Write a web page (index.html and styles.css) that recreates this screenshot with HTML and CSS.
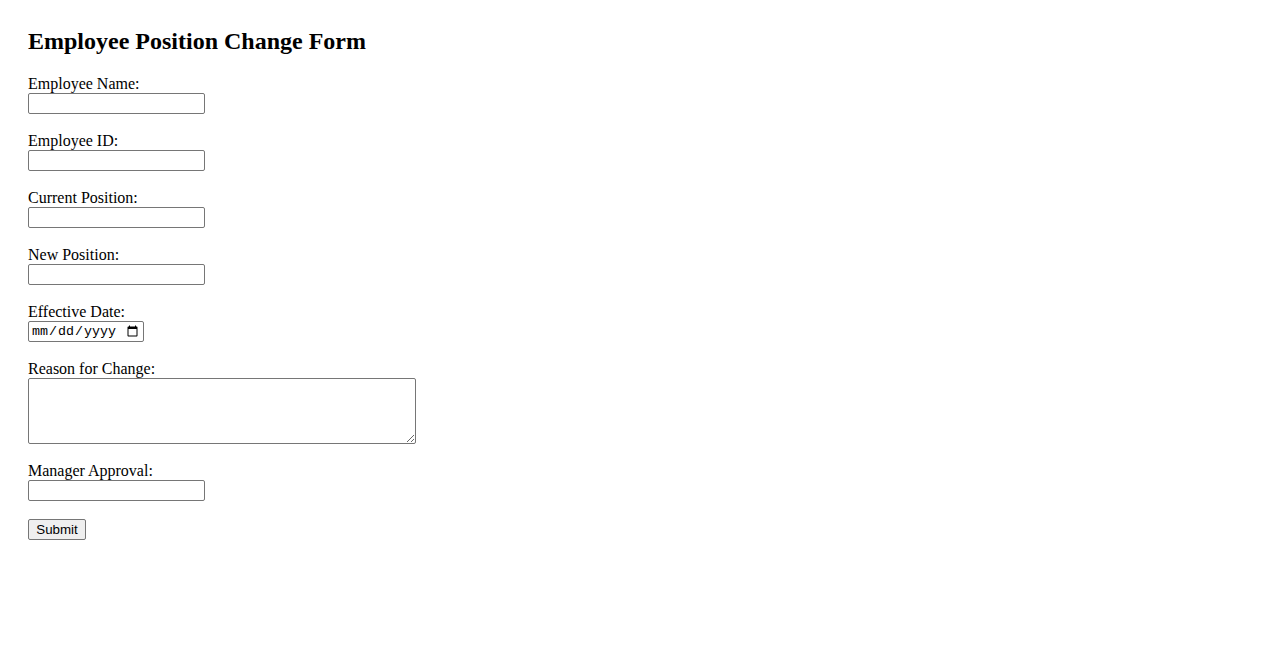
FILE: index.html
```html
<!DOCTYPE html>
<html lang="en">
<head>
<meta charset="utf-8">
<title>Employee Position Change Form</title>
<link rel="stylesheet" href="styles.css">
</head>
<body>
<h2 class="title">Employee Position Change Form</h2>
<form class="form">
  <div class="field">
    <label class="label" for="name">Employee Name:</label>
    <input class="text" type="text" id="name">
  </div>
  <div class="field">
    <label class="label" for="eid">Employee ID:</label>
    <input class="text" type="text" id="eid">
  </div>
  <div class="field">
    <label class="label" for="cur">Current Position:</label>
    <input class="text" type="text" id="cur">
  </div>
  <div class="field">
    <label class="label" for="newp">New Position:</label>
    <input class="text" type="text" id="newp">
  </div>
  <div class="field">
    <label class="label" for="date">Effective Date:</label>
    <input class="date" type="date" id="date">
  </div>
  <div class="field">
    <label class="label" for="reason">Reason for Change:</label>
    <textarea class="area" id="reason"></textarea>
  </div>
  <div class="field">
    <label class="label" for="mgr">Manager Approval:</label>
    <input class="text" type="text" id="mgr">
  </div>
  <div class="field">
    <button class="submit" type="submit">Submit</button>
  </div>
</form>
</body>
</html>
```
FILE: styles.css
```css
html, body {
  background: #fff;
}
body {
  margin: 0;
  padding: 28px;
  font-family: "Liberation Serif", "Times New Roman", serif;
  font-size: 16px;
  color: #000;
}
.title {
  margin: 0 0 20px;
  font-size: 24px;
  font-weight: bold;
}
.field {
  margin-bottom: 18px;
}
.label {
  display: block;
  height: 18px;
}
.text {
  box-sizing: border-box;
  display: block;
  width: 177px;
  height: 21px;
  margin: 0;
  font-family: "Liberation Sans", Arial, sans-serif;
  font-size: 13.33px;
  border: 1px solid #767676;
  border-radius: 2px;
  padding: 1px 2px;
}
.date {
  box-sizing: border-box;
  display: block;
  width: 116px;
  height: 21px;
  margin: 0;
  font-family: "Liberation Mono", monospace;
  font-size: 13.33px;
  border: 1px solid #767676;
  border-radius: 2px;
  padding: 1px 2px;
}
.area {
  box-sizing: border-box;
  display: block;
  width: 388px;
  height: 66px;
  margin: 0;
  border: 1px solid #767676;
  border-radius: 2px;
  padding: 2px;
}
.submit {
  box-sizing: border-box;
  display: block;
  height: 21px;
  width: 58px;
  margin: 0;
  padding: 1px 6px;
  font-family: "Liberation Sans", Arial, sans-serif;
  font-size: 13.33px;
  background: #efefef;
  color: #000;
  border: 1px solid #767676;
  border-radius: 2px;
}
```
